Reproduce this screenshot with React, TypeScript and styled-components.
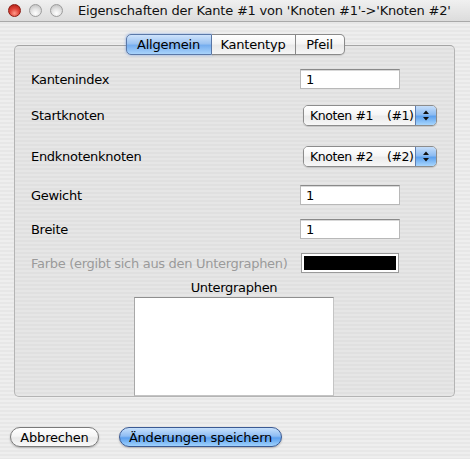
import React from "react";
import styled, { createGlobalStyle } from "styled-components";

const Global = createGlobalStyle`
  html, body { margin: 0; padding: 0; }
  body {
    width: 470px; height: 459px; overflow: hidden;
    font-family: "DejaVu Sans", "Liberation Sans", sans-serif;
    font-size: 13px; color: #000;
  }
`;

const Window = styled.div`
  width: 470px; height: 459px;
  display: flex; flex-direction: column;
  background: repeating-linear-gradient(to bottom, #eeeeee 0px, #eeeeee 2px, #e7e7e7 2px, #e7e7e7 4px);
`;

const TitleBar = styled.div`
  height: 21px;
  display: flex; align-items: center;
  padding-left: 8px;
  background: linear-gradient(#f0f0f0, #dcdcdc);
  border-bottom: 1px solid #a9a9a9;
`;

const Light = styled.span<{ $red?: boolean }>`
  width: 13px; height: 13px; border-radius: 50%;
  box-sizing: border-box;
  margin-right: 8px;
  border: 1px solid ${p => (p.$red ? "#8c1a10" : "#9c9c9c")};
  background: ${p =>
    p.$red
      ? "radial-gradient(circle at 50% 75%, #ff9b8a 0%, #e0453a 45%, #a8180e 100%)"
      : "radial-gradient(circle at 50% 75%, #ffffff 0%, #e4e4e4 45%, #b9b9b9 100%)"};
`;

const Title = styled.span`
  margin-left: 7px;
  font-size: 13px;
  letter-spacing: -0.2px;
  color: #111;
  white-space: pre;
`;

const Body = styled.div`
  display: flex; flex-direction: column;
  padding: 12px 15px 0 14px;
`;

const TabBar = styled.div`
  display: flex; justify-content: center;
  position: relative; z-index: 1;
  height: 21px;
  padding-left: 1px;
`;

const Tab = styled.div<{ $active?: boolean; $first?: boolean; $last?: boolean; $w: number }>`
  width: ${p => p.$w}px; height: 21px;
  box-sizing: border-box;
  display: flex; align-items: center; justify-content: center;
  font-size: 13px;
  letter-spacing: -0.2px;
  border: 1px solid ${p => (p.$active ? "#5a78a8" : "#8a8a8a")};
  border-left-width: ${p => (p.$first ? 1 : 0)}px;
  border-radius: ${p => (p.$first ? "5px 0 0 5px" : p.$last ? "0 5px 5px 0" : "0")};
  background: ${p =>
    p.$active
      ? "linear-gradient(#cfe3fb 0%, #9cc3f1 45%, #76aeef 55%, #a9d3fb 100%)"
      : "linear-gradient(#ffffff 0%, #f4f4f4 45%, #e9e9e9 55%, #f6f6f6 100%)"};
  box-shadow: ${p => (p.$active ? "0 0 3px rgba(60,120,220,0.6)" : "0 1px 1px rgba(0,0,0,0.12)")};
`;

const Panel = styled.div`
  margin-top: -10px;
  height: 352px;
  box-sizing: border-box;
  border: 1px solid #b4b4b4;
  border-top-color: #a4a4a4;
  border-radius: 5px;
  background: repeating-linear-gradient(to bottom, #e6e6e6 0px, #e6e6e6 2px, #e0e0e0 2px, #e0e0e0 4px);
  padding: 23px 0 0 16px;
  display: flex; flex-direction: column;
`;

const Row = styled.div<{ $h: number; $gap: number }>`
  height: ${p => p.$h}px;
  margin-bottom: ${p => p.$gap}px;
  display: flex; align-items: center;
`;

const Label = styled.span<{ $disabled?: boolean }>`
  width: 269px;
  white-space: nowrap;
  letter-spacing: -0.3px;
  color: ${p => (p.$disabled ? "#9a9a9a" : "#000")};
`;

const Field = styled.div`
  width: 100px; height: 20px;
  box-sizing: border-box;
  background: #fff;
  border: 1px solid #b8b8b8;
  border-top-color: #8a8a8a;
  box-shadow: inset 0 1px 0 #d8d8d8;
  padding: 1px 0 0 5px;
  display: flex; align-items: center;
  font-size: 13px;
`;

const Popup = styled.div`
  margin-left: 3px;
  width: 134px; height: 21px;
  box-sizing: border-box;
  display: flex;
  border: 1px solid #8c8c8c;
  border-radius: 5px;
  overflow: hidden;
  box-shadow: 0 1px 1px rgba(0,0,0,0.15);
`;

const PopupText = styled.div`
  flex: 1;
  display: flex; align-items: center;
  padding-left: 6px;
  white-space: pre;
  font-size: 12.5px;
  letter-spacing: -0.4px;
  background: linear-gradient(#ffffff 0%, #f6f6f6 45%, #ebebeb 55%, #f7f7f7 100%);
`;

const PopupName = styled.span`
  width: 77px;
`;

const PopupArrows = styled.div`
  width: 20px;
  border-left: 1px solid #5f7eb0;
  display: flex; align-items: center; justify-content: center;
  background: linear-gradient(#c6defa 0%, #8dbcf2 45%, #5fa2ee 55%, #a8d6fd 100%);
`;

const ColorWell = styled.div`
  margin-left: 1px;
  width: 98px; height: 20px;
  box-sizing: border-box;
  border: 1px solid #9a9a9a;
  background: #000;
  box-shadow: inset 0 0 0 2px #fff;
`;

const ListSection = styled.div`
  display: flex; flex-direction: column; align-items: center;
  margin-left: -16px;
  padding-right: 1px;
`;

const ListLabel = styled.div`
  height: 16px; margin-top: 6px;
  display: flex; align-items: center;
  letter-spacing: -0.3px;
`;

const ListBox = styled.div`
  margin-top: 2px;
  width: 200px; height: 99px;
  box-sizing: border-box;
  background: #fff;
  border: 1px solid #c4c4c4;
  border-top-color: #8f8f8f;
  border-left-color: #a8a8a8;
  margin-right: 1px;
`;

const ButtonRow = styled.div`
  display: flex; gap: 20px;
  padding: 30px 0 0 10px;
`;

const Button = styled.div<{ $primary?: boolean; $w: number }>`
  width: ${p => p.$w}px; height: 20px;
  box-sizing: border-box;
  border-radius: 10px;
  display: flex; align-items: center; justify-content: center;
  font-size: 13px;
  letter-spacing: -0.2px;
  border: 1px solid ${p => (p.$primary ? "#3b5a93" : "#7a7a7a")};
  background: ${p =>
    p.$primary
      ? "linear-gradient(#c6e0fc 0%, #8fbdf3 45%, #5b9fee 55%, #9fd2fd 100%)"
      : "linear-gradient(#ffffff 0%, #f5f5f5 45%, #e8e8e8 55%, #fafafa 100%)"};
  box-shadow: 0 1px 2px rgba(0,0,0,0.25);
`;

const Arrows = () => (
  <svg width="8" height="11" viewBox="0 0 8 11">
    <path d="M4 0.5 L7 4 L1 4 Z" fill="#111" />
    <path d="M4 10.5 L7 7 L1 7 Z" fill="#111" />
  </svg>
);

export default function App() {
  return (
    <>
      <Global />
      <Window>
        <TitleBar>
          <Light $red />
          <Light />
          <Light />
          <Title>Eigenschaften der Kante #1 von 'Knoten #1'-&gt;'Knoten #2'</Title>
        </TitleBar>
        <Body>
          <TabBar>
            <Tab $active $first $w={86}>Allgemein</Tab>
            <Tab $w={84}>Kantentyp</Tab>
            <Tab $last $w={49}>Pfeil</Tab>
          </TabBar>
          <Panel>
            <Row $h={20} $gap={16}>
              <Label>Kantenindex</Label>
              <Field>1</Field>
            </Row>
            <Row $h={21} $gap={20}>
              <Label>Startknoten</Label>
              <Popup>
                <PopupText><PopupName>Knoten #1</PopupName>(#1)</PopupText>
                <PopupArrows><Arrows /></PopupArrows>
              </Popup>
            </Row>
            <Row $h={21} $gap={18}>
              <Label>Endknotenknoten</Label>
              <Popup>
                <PopupText><PopupName>Knoten #2</PopupName>(#2)</PopupText>
                <PopupArrows><Arrows /></PopupArrows>
              </Popup>
            </Row>
            <Row $h={20} $gap={14}>
              <Label>Gewicht</Label>
              <Field>1</Field>
            </Row>
            <Row $h={20} $gap={14}>
              <Label>Breite</Label>
              <Field>1</Field>
            </Row>
            <Row $h={20} $gap={0}>
              <Label $disabled>Farbe (ergibt sich aus den Untergraphen)</Label>
              <ColorWell />
            </Row>
            <ListSection>
              <ListLabel>Untergraphen</ListLabel>
              <ListBox />
            </ListSection>
          </Panel>
        </Body>
        <ButtonRow>
          <Button $w={89}>Abbrechen</Button>
          <Button $primary $w={163}>Änderungen speichern</Button>
        </ButtonRow>
      </Window>
    </>
  );
}
